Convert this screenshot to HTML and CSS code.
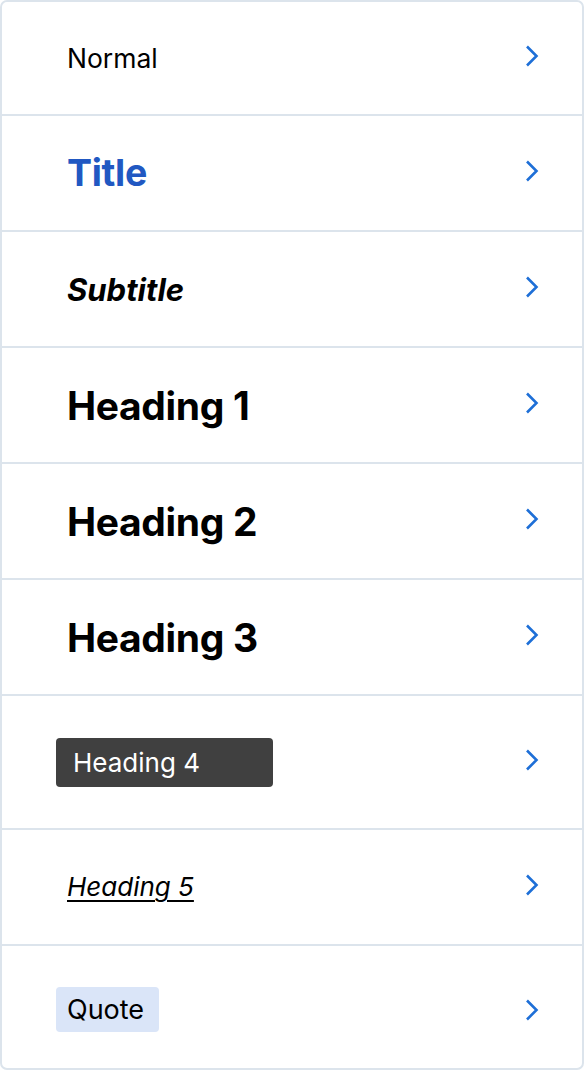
FILE: index.html
```html
<!DOCTYPE html>
<html>
<head>
<meta charset="utf-8">
<link rel="stylesheet" href="styles.css">
</head>
<body>
<div class="card">
  <div class="row r-first"><span class="label normal">Normal</span><svg class="chev" viewBox="0 0 14 22" width="14" height="22"><path d="M2 1.5 L11.5 11 L2 20.5"/></svg></div>
  <div class="row"><span class="label title">Title</span><svg class="chev" viewBox="0 0 14 22" width="14" height="22"><path d="M2 1.5 L11.5 11 L2 20.5"/></svg></div>
  <div class="row"><span class="label subtitle">Subtitle</span><svg class="chev" viewBox="0 0 14 22" width="14" height="22"><path d="M2 1.5 L11.5 11 L2 20.5"/></svg></div>
  <div class="row"><span class="label heading">Heading 1</span><svg class="chev" viewBox="0 0 14 22" width="14" height="22"><path d="M2 1.5 L11.5 11 L2 20.5"/></svg></div>
  <div class="row"><span class="label heading">Heading 2</span><svg class="chev" viewBox="0 0 14 22" width="14" height="22"><path d="M2 1.5 L11.5 11 L2 20.5"/></svg></div>
  <div class="row"><span class="label heading">Heading 3</span><svg class="chev" viewBox="0 0 14 22" width="14" height="22"><path d="M2 1.5 L11.5 11 L2 20.5"/></svg></div>
  <div class="row r-tall"><span class="h4">Heading 4</span><svg class="chev" viewBox="0 0 14 22" width="14" height="22"><path d="M2 1.5 L11.5 11 L2 20.5"/></svg></div>
  <div class="row"><span class="label h5">Heading 5</span><svg class="chev" viewBox="0 0 14 22" width="14" height="22"><path d="M2 1.5 L11.5 11 L2 20.5"/></svg></div>
  <div class="row r-last"><span class="quote">Quote</span><svg class="chev" viewBox="0 0 14 22" width="14" height="22"><path d="M2 1.5 L11.5 11 L2 20.5"/></svg></div>
</div>
</body>
</html>
```
FILE: styles.css
```css
* { box-sizing: border-box; }
html, body { margin: 0; padding: 0; background: #ffffff; }
body { font-family: Inter, "Noto Sans", sans-serif; color: #000; }
.card {
  width: 584px;
  height: 1070px;
  border: 2px solid #dce4ec;
  border-radius: 7px;
  display: flex;
  flex-direction: column;
  overflow: hidden;
}
.row {
  height: 116px;
  border-bottom: 2px solid #dce4ec;
  display: flex;
  align-items: center;
  justify-content: space-between;
  padding: 0 43px 0 54px;
  flex: none;
}
.r-first { height: 114px; }
.r-tall { height: 134px; }
.r-last { height: 122px; border-bottom: none; padding-top: 4px; }
.r-last .chev { margin-top: 2px; }
.label { padding-left: 11px; line-height: 1; }
.normal { font-size: 26.5px; font-weight: 400; }
.title { font-size: 37.5px; font-weight: 700; color: #2158c2; letter-spacing: -0.3px; }
.subtitle { font-size: 31px; font-weight: 700; font-style: italic; letter-spacing: 0; }
.heading { font-size: 39px; font-weight: 700; letter-spacing: -0.35px; }
.h4 {
  width: 217px;
  height: 49px;
  background: #404040;
  color: #fff;
  border-radius: 4px;
  font-size: 26px;
  display: flex;
  align-items: center;
  padding-left: 17px;
}
.h5 {
  font-size: 26px;
  font-style: italic;
  text-decoration: underline;
  text-decoration-thickness: 2px;
  text-underline-offset: 4px;
}
.quote {
  height: 45px;
  width: 103px;
  background: #dae5f8;
  border-radius: 4px;
  font-size: 27px;
  display: flex;
  align-items: center;
  padding-left: 11px;
}
.chev { display: block; margin-top: -4px; }
.chev path { fill: none; stroke: #1e6fd7; stroke-width: 2.6; stroke-linecap: butt; stroke-linejoin: miter; }
```
